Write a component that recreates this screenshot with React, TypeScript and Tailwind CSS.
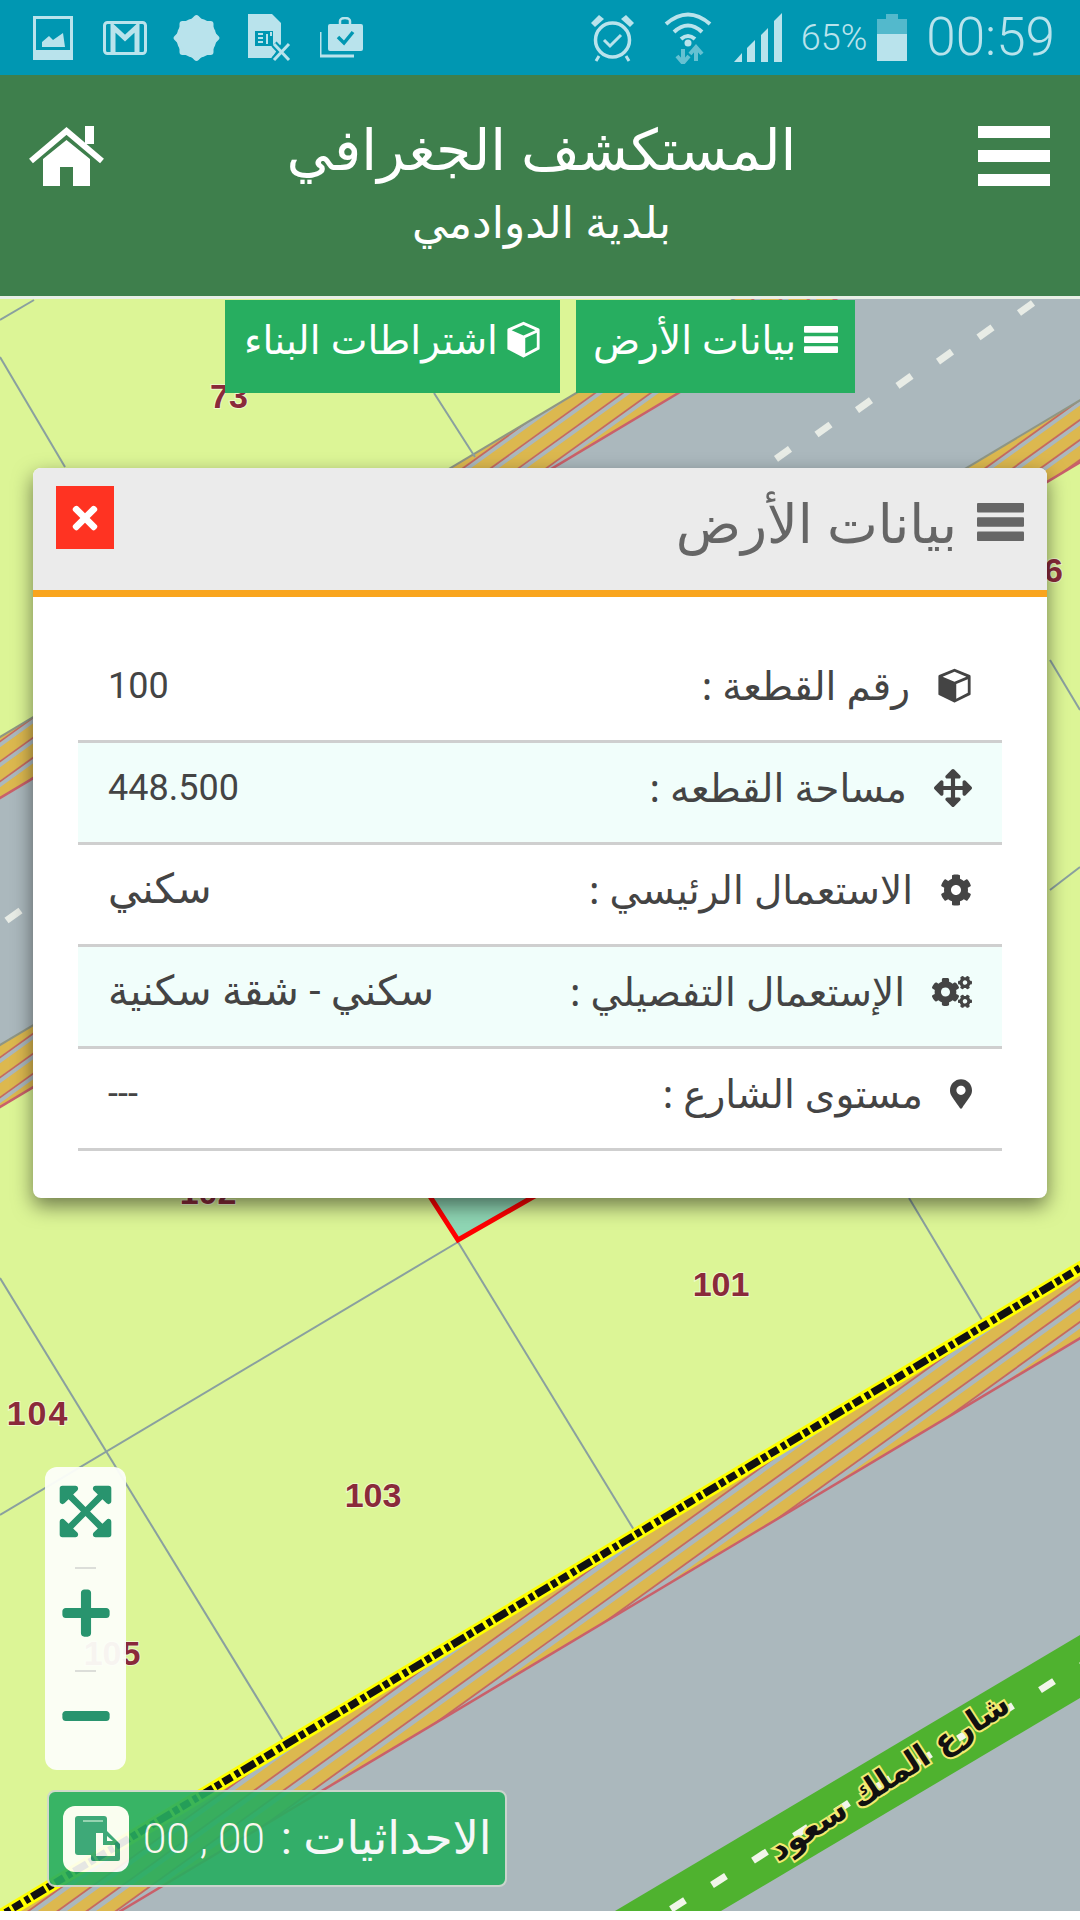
import React from "react";
import { FaArrowsAlt, FaCog, FaCogs, FaMapMarkerAlt, FaTimes, FaExpandArrowsAlt, FaPlus, FaMinus } from "react-icons/fa";

const ar = { fontFamily: '"Noto Sans", "DejaVu Sans", sans-serif' };
const num = { fontFamily: 'Roboto, "Noto Sans", "DejaVu Sans", sans-serif' };

function Cube({ w, h }: { w: number; h: number }) {
  return (
    <svg width={w} height={h} viewBox="0 0 100 100" preserveAspectRatio="none" fill="currentColor">
      <path
        fillRule="evenodd"
        d="M50 2 L94 20 Q96 21 96 24 V74 Q96 77 93 78 L52 98 Q50 99 48 98 L7 78 Q4 77 4 74 V24 Q4 21 6 20 Z M50 11 L16 25 L50 39 L84 25 Z M55 46 V88 L88 71 V32 Z"
      />
    </svg>
  );
}

function Bars({ w, h }: { w: number; h: number }) {
  const t = h * 0.25;
  return (
    <svg width={w} height={h} viewBox={`0 0 ${w} ${h}`} fill="currentColor">
      <rect width={w} height={t} rx="1" />
      <rect y={(h - t) / 2} width={w} height={t} rx="1" />
      <rect y={h - t} width={w} height={t} rx="1" />
    </svg>
  );
}

const rows = [
  { icon: <Cube w={35} h={35} />, label: "رقم القطعة :", value: "100", alt: false, isNum: true },
  { icon: <FaArrowsAlt className="w-[38px] h-[38px]" />, label: "مساحة القطعه :", value: "448.500", alt: true, isNum: true },
  { icon: <FaCog className="w-[32px] h-[32px]" />, label: "الاستعمال الرئيسي :", value: "سكني", alt: false, isNum: false },
  { icon: <FaCogs className="w-[40px] h-[36px]" />, label: "الإستعمال التفصيلي :", value: "سكني - شقة سكنية", alt: true, isNum: false },
  { icon: <FaMapMarkerAlt className="w-[22px] h-[34px]" />, label: "مستوى الشارع :", value: "---", alt: false, isNum: true },
];

const off = (b: number) => b - 299;

function Hatch({ id, E, E2, s, step, phase, width, redOff, topEdge }: { id: string; E: number; E2: number; s: number; step: number; phase: number; width: number; redOff: number; topEdge: boolean }) {
  const m = 0.597;
  const pts = `-10,${off(E + 10 * m)} 1090,${off(E - 1090 * m)} 1090,${off(E2 - 1090 * m)} -10,${off(E2 + 10 * m)}`;
  const lines: React.ReactNode[] = [];
  const first = phase + step * Math.floor((E - 80 - phase) / step);
  for (let c = first; c < E2 + 260; c += step) {
    const y = (x: number, d: number) => off(c + d) - s * x;
    lines.push(<line key={c} x1={-10} y1={y(-10, 0)} x2={1090} y2={y(1090, 0)} stroke="#dcb84f" strokeWidth={width} />);
    lines.push(<line key={"r" + c} x1={-10} y1={y(-10, redOff)} x2={1090} y2={y(1090, redOff)} stroke="#c76a5c" strokeWidth="1.8" />);
  }
  return (
    <g>
      <clipPath id={id}>
        <polygon points={pts} />
      </clipPath>
      <g clipPath={`url(#${id})`}>{lines}</g>
      {topEdge && <line x1={-10} y1={off(E + 10 * m)} x2={1090} y2={off(E - 1090 * m)} stroke="#8f9684" strokeWidth="2" />}
      <line x1={-10} y1={off(E2 + 10 * m)} x2={1090} y2={off(E2 - 1090 * m)} stroke="#c9606a" strokeWidth="2.5" />
    </g>
  );
}

function MapDrawing() {
  const dashes: React.ReactNode[] = [];
  for (let x = 1026; x > -20; x -= 40.5) {
    const y = off(308 + 0.6 * (1026 - x));
    dashes.push(<line key={x} x1={x - 7} y1={y + 5} x2={x + 7} y2={y - 5} stroke="#e8ece6" strokeWidth="7" />);
  }
  const greenDashes: React.ReactNode[] = [];
  for (let x = 678; x < 1100; x += 41) {
    const y = off(1666 + 0.594 * (1080 - x));
    greenDashes.push(<line key={x} x1={x - 7} y1={y + 4.5} x2={x + 7} y2={y - 4.5} stroke="#f1f5ea" strokeWidth="7" />);
  }
  return (
    <svg className="absolute inset-0 w-[1080px] h-[1612px]" viewBox="0 0 1080 1612">
      <rect width="1080" height="1612" fill="#dcf596" />
      <polygon points={`0,${off(737)} 1080,${off(737 - 645)} 1080,${off(1107 - 645)} 0,${off(1107)}`} fill="#abb8bd" />
      <Hatch id="h1" E={737} E2={798} s={0.72} step={20} phase={814} width={11} redOff={7.5} topEdge />
      <Hatch id="h2" E={1045} E2={1107} s={0.72} step={20} phase={1010} width={11} redOff={7.5} topEdge />
      {dashes}
      <g stroke="#8aa09f" strokeWidth="2">
        <line x1="0" y1={off(320)} x2="34" y2={off(300)} />
        <line x1="0" y1={off(357)} x2="65" y2={off(467)} />
        <line x1="434" y1={off(393)} x2="475" y2={off(457)} />
        <line x1="1050" y1={off(660)} x2="1080" y2={off(710)} />
        <line x1="1050" y1={off(890)} x2="1080" y2={off(867)} />
        <line x1="458" y1={off(1242)} x2="0" y2={off(1515)} />
        <line x1="458" y1={off(1242)} x2="634" y2={off(1530)} />
        <line x1="0" y1={off(1278)} x2="286" y2={off(1745)} />
        <line x1="909" y1={off(1198)} x2="985" y2={off(1325)} />
      </g>
      <polygon points={`413,${off(1170)} 458,${off(1240)} 580,${off(1170)}`} fill="#8fd6b4" stroke="#f00" strokeWidth="5" />
      <polygon points={`1080,${off(1268)} 1080,1612 0,1612 0,${off(1916)}`} fill="#abb8bd" />
      <Hatch id="h3" E={1916} E2={1983} s={0.72} step={21} phase={2029} width={11} redOff={7.5} topEdge={false} />
      <line x1={-10} y1={off(1922)} x2={1090} y2={off(1922 - 660)} stroke="#ffff00" strokeWidth="13" />
      <line x1={-10} y1={off(1922)} x2={1090} y2={off(1922 - 660)} stroke="#111" strokeWidth="7.5" strokeDasharray="15 3 6 3 10 4 5 3" />
      <polygon points={`615,1612 1080,${off(1635)} 1080,${off(1698)} 721,1612`} fill="#4fb22f" />
      {greenDashes}
      <g fontFamily="Liberation Sans, sans-serif" fontWeight="700" fontSize="34" fill="#8a2a3a" textAnchor="middle" stroke="#ffffff" strokeOpacity=".5" strokeWidth="2" paintOrder="stroke">
        <text x="229" y={off(408)}>73</text>
        <text x="1063" y={off(582)} textAnchor="end">6</text>
        <text x="208" y={off(1204)}>102</text>
        <text x="721" y={off(1296)}>101</text>
        <text x="38" y={off(1425)} letterSpacing="2">104</text>
        <text x="373" y={off(1507)}>103</text>
        <text x="112" y={off(1665)}>105</text>
      </g>
      <text
        x="895"
        y={off(1786)}
        textAnchor="middle"
        transform={`rotate(-33 895 ${off(1786)})`}
        fontFamily="DejaVu Sans, sans-serif"
        fontWeight="700"
        fontSize="32"
        fill="#111"
        stroke="#f2ea72"
        strokeWidth="4"
        paintOrder="stroke"
      >
        شارع الملك سعود
      </text>
    </svg>
  );
}

function StatusIcons() {
  const c = "#b9e3ec";
  return (
    <div className="flex items-center">
      <svg className="ml-[33px]" width="40" height="44" viewBox="0 0 40 44">
        <rect x="1.5" y="1.5" width="37" height="41" fill="none" stroke={c} strokeWidth="3" />
        <rect x="1" y="34" width="38" height="9" fill={c} />
        <path d="M9 31 L9 26 L16 20 L20 24 L30 17 L32 31 Z" fill={c} />
      </svg>
      <svg className="ml-[30px]" width="44" height="34" viewBox="0 0 44 34">
        <rect x="1.5" y="1.5" width="41" height="31" rx="3" fill="none" stroke={c} strokeWidth="3" />
        <path d="M10 32 V6 L22 17 L34 6 V32" fill="none" stroke={c} strokeWidth="5" />
      </svg>
      <svg className="ml-[26px]" width="47" height="48" viewBox="0 0 47 48" fill={c}>
        <circle cx="23.5" cy="24" r="20" />
        <rect x="6.5" y="7" width="34" height="34" rx="3" />
        <rect x="6.5" y="7" width="34" height="34" rx="3" transform="rotate(45 23.5 24)" />
      </svg>
      <svg className="ml-[28px]" width="44" height="48" viewBox="0 0 44 48">
        <path d="M0 0 L24 0 L33 9 L33 30 L24 44 L0 44 Z" fill={c} />
        <path d="M7 17 H25 V32 H7 Z" fill="#0097b2" />
        <path d="M10 20 H15 M10 24 H15 M10 28 H15 M19 20 V30 M23 18 V22" stroke={c} strokeWidth="2" />
        <path d="M26 30 L41 46 M41 30 L26 46" stroke="#0097b2" strokeWidth="7" />
        <path d="M26 30 L41 46 M41 30 L26 46" stroke={c} strokeWidth="3" />
      </svg>
      <svg className="ml-[28px]" width="43" height="41" viewBox="0 0 43 41">
        <path d="M0 15 V39 H34" fill="none" stroke={c} strokeWidth="3" />
        <rect x="8" y="7" width="35" height="27" rx="2" fill={c} />
        <path d="M20 7 V4 a5 3 0 0 1 10 0 V7" fill="none" stroke={c} strokeWidth="2.5" />
        <path d="M18 20 L24 26 L33 15" fill="none" stroke="#0097b2" strokeWidth="3.5" />
      </svg>
    </div>
  );
}

function StatusRight() {
  const c = "#b9e3ec";
  return (
    <div className="flex items-center">
      <svg width="45" height="48" viewBox="0 0 45 48">
        <circle cx="22.5" cy="26" r="17" fill="none" stroke={c} strokeWidth="3.5" />
        <path d="M14 26 L20 32 L31 21" fill="none" stroke={c} strokeWidth="3" />
        <path d="M1 9 L9 1 L14 5 L5 13 Z M44 9 L36 1 L31 5 L40 13 Z" fill={c} />
        <path d="M9 42 L6 47 M36 42 L39 47" stroke={c} strokeWidth="3" />
      </svg>
      <svg className="ml-[29px]" width="48" height="53" viewBox="0 0 48 53">
        <path d="M2 13 Q24 -6 46 13 M10 21 Q24 8 38 21 M17 28 Q24 22 31 28" fill="none" stroke={c} strokeWidth="4" />
        <circle cx="24" cy="32" r="3.5" fill={c} />
        <path d="M19 52 V38 M13 45 L19 52 L25 45" fill="none" stroke={c} strokeOpacity=".55" strokeWidth="4" />
        <path d="M32 50 V36 M26 43 L32 36 L38 43" fill="none" stroke={c} strokeOpacity=".55" strokeWidth="4" />
      </svg>
      <svg className="ml-[22px]" width="48" height="49" viewBox="0 0 48 49">
        <path d="M0 49 L8 40 V49 Z M13 35 L21 27 V49 H13 Z M27 22 L34 15 V49 H27 Z M40 8 L48 0 V49 H40 Z" fill={c} />
      </svg>
      <span className="ml-[19px] text-[36px] text-[#b9e3ec] font-light" style={{ fontFamily: "Roboto, sans-serif" }}>65%</span>
      <svg className="ml-[10px]" width="30" height="47" viewBox="0 0 30 47">
        <rect x="9" y="0" width="12" height="5" fill={c} fillOpacity=".45" />
        <rect x="0" y="5" width="30" height="15" fill={c} fillOpacity=".45" />
        <rect x="0" y="20" width="30" height="27" fill={c} />
      </svg>
      <span className="ml-[19px] mr-[25px] text-[53px] leading-none text-[#b9e3ec] font-light" style={{ fontFamily: "Roboto, sans-serif" }}>00:59</span>
    </div>
  );
}

function Home() {
  return (
    <svg width="77" height="60" viewBox="0 0 77 60" fill="#fff">
      <path d="M15 33 L38.5 14 L62 33 V60 H45 V41 H32 V60 H15 Z" />
      <path d="M3 35 L38.5 5 L74 35" fill="none" stroke="#fff" strokeWidth="6" />
      <rect x="57" y="0" width="9" height="18" />
    </svg>
  );
}

function CopyIcon() {
  return (
    <div className="w-[66px] h-[66px] rounded-[12px] bg-[#fefffa] shrink-0">
      <svg width="66" height="66" viewBox="0 0 66 66">
        <rect x="12" y="10" width="32" height="39" rx="3" fill="#2ea175" />
        <rect x="20" y="14" width="20" height="2" fill="#8fd0b4" />
        <path d="M28 23 H42 L57 38 V53 Q57 55 55 55 H30 Q28 55 28 53 Z" fill="#2ea175" />
        <path d="M33 27 H40 V39 H52 V50 H33 Z" fill="#fefffa" />
        <path d="M44 30 L50 35 H44 Z" fill="#fefffa" />
      </svg>
    </div>
  );
}

export default function App() {
  return (
    <div className="w-[1080px] h-[1920px] bg-white flex flex-col overflow-hidden" style={ar}>
      <div className="h-[75px] bg-[#0097b2] flex items-center justify-between">
        <StatusIcons />
        <StatusRight />
      </div>
      <div className="h-[221px] bg-[#3e7f4c] flex items-start justify-between pl-[28px] pr-[30px] text-white">
        <div className="mt-[51px]">
          <Home />
        </div>
        <div className="flex flex-col items-center mt-[33px]">
          <div className="text-[57px] leading-[80px]">المستكشف الجغرافي</div>
          <div className="text-[44px] leading-[64px] mt-[1px]">بلدية الدوادمي</div>
        </div>
        <div className="mt-[51px] flex flex-col gap-[12px]">
          <div className="w-[72px] h-[12px] bg-white" />
          <div className="w-[72px] h-[12px] bg-white" />
          <div className="w-[72px] h-[12px] bg-white" />
        </div>
      </div>
      <div className="h-[3px] bg-[#e8efe6]" />
      <div className="relative h-[1612px] flex flex-col">
        <MapDrawing />
        <div className="relative flex justify-center gap-[16px] text-white text-[39px] pt-px" dir="rtl">
          <div className="w-[279px] h-[93px] pb-[14px] bg-[#27ae60] flex items-center justify-center gap-[8px]">
            <Bars w={34} h={27} />
            <span>بيانات الأرض</span>
          </div>
          <div className="w-[335px] h-[93px] pb-[14px] bg-[#27ae60] flex items-center justify-center gap-[8px]">
            <Cube w={35} h={37} />
            <span>اشتراطات البناء</span>
          </div>
        </div>
        <div className="relative mt-[75px] mx-[33px] bg-white rounded-[8px] overflow-hidden shadow-[0_8px_20px_rgba(0,0,0,0.5)]" dir="rtl">
          <div className="h-[129px] bg-[#ebebeb] border-b-[7px] border-[#f9a51e] flex justify-between text-[#666]">
            <div className="flex items-center gap-[20px] pr-[23px] pb-[14px]">
              <Bars w={47} h={38} />
              <span className="text-[54px]">بيانات الأرض</span>
            </div>
            <div className="w-[58px] h-[63px] mt-[18px] ml-[23px] bg-[#ff3322] flex items-center justify-center text-white">
              <FaTimes className="w-[32px] h-[36px]" />
            </div>
          </div>
          <div className="px-[45px] pt-[44px] pb-[47px] text-[39px] text-[#444]">
            {rows.map((r) => (
              <div key={r.label} className={`h-[102px] border-b-[3px] border-[#cfcfcf] flex items-center justify-between pb-[10px] px-[30px] ${r.alt ? "bg-[#f1fefb]" : ""}`}>
                <div className="flex items-center gap-[27px]">
                  {r.icon}
                  <span>{r.label}</span>
                </div>
                <span className={r.isNum ? "text-[36px]" : "text-[41px]"} style={num}>{r.value}</span>
              </div>
            ))}
          </div>
        </div>
        <div className="relative mt-auto pb-[24px] pl-[45px] flex flex-col gap-[20px] items-start">
          <div className="w-[81px] h-[303px] rounded-[12px] bg-[#fdfffa] opacity-95 flex flex-col items-center pt-[15px] text-[#1f8f6c]">
            <FaExpandArrowsAlt className="w-[59px] h-[59px] shrink-0" />
            <div className="w-[21px] h-[2px] bg-[#ddd] mt-[26px] shrink-0" />
            <FaPlus className="w-[54px] h-[54px] mt-[17px] shrink-0" />
            <div className="w-[21px] h-[2px] bg-[#ddd] mt-[30px] shrink-0" />
            <FaMinus className="w-[54px] h-[54px] mt-[17px] shrink-0" />
          </div>
          <div className="ml-[2px] w-[460px] h-[97px] rounded-[8px] bg-[#27ae60] opacity-90 border-2 border-[#cfd8cf] flex items-center pl-[14px] text-white" style={num}>
            <CopyIcon />
            <span className="ml-[14px] text-[42px] font-light">00 , 00</span>
            <span className="ml-[16px] text-[46px]" dir="rtl">الاحداثيات :</span>
          </div>
        </div>
      </div>
    </div>
  );
}
